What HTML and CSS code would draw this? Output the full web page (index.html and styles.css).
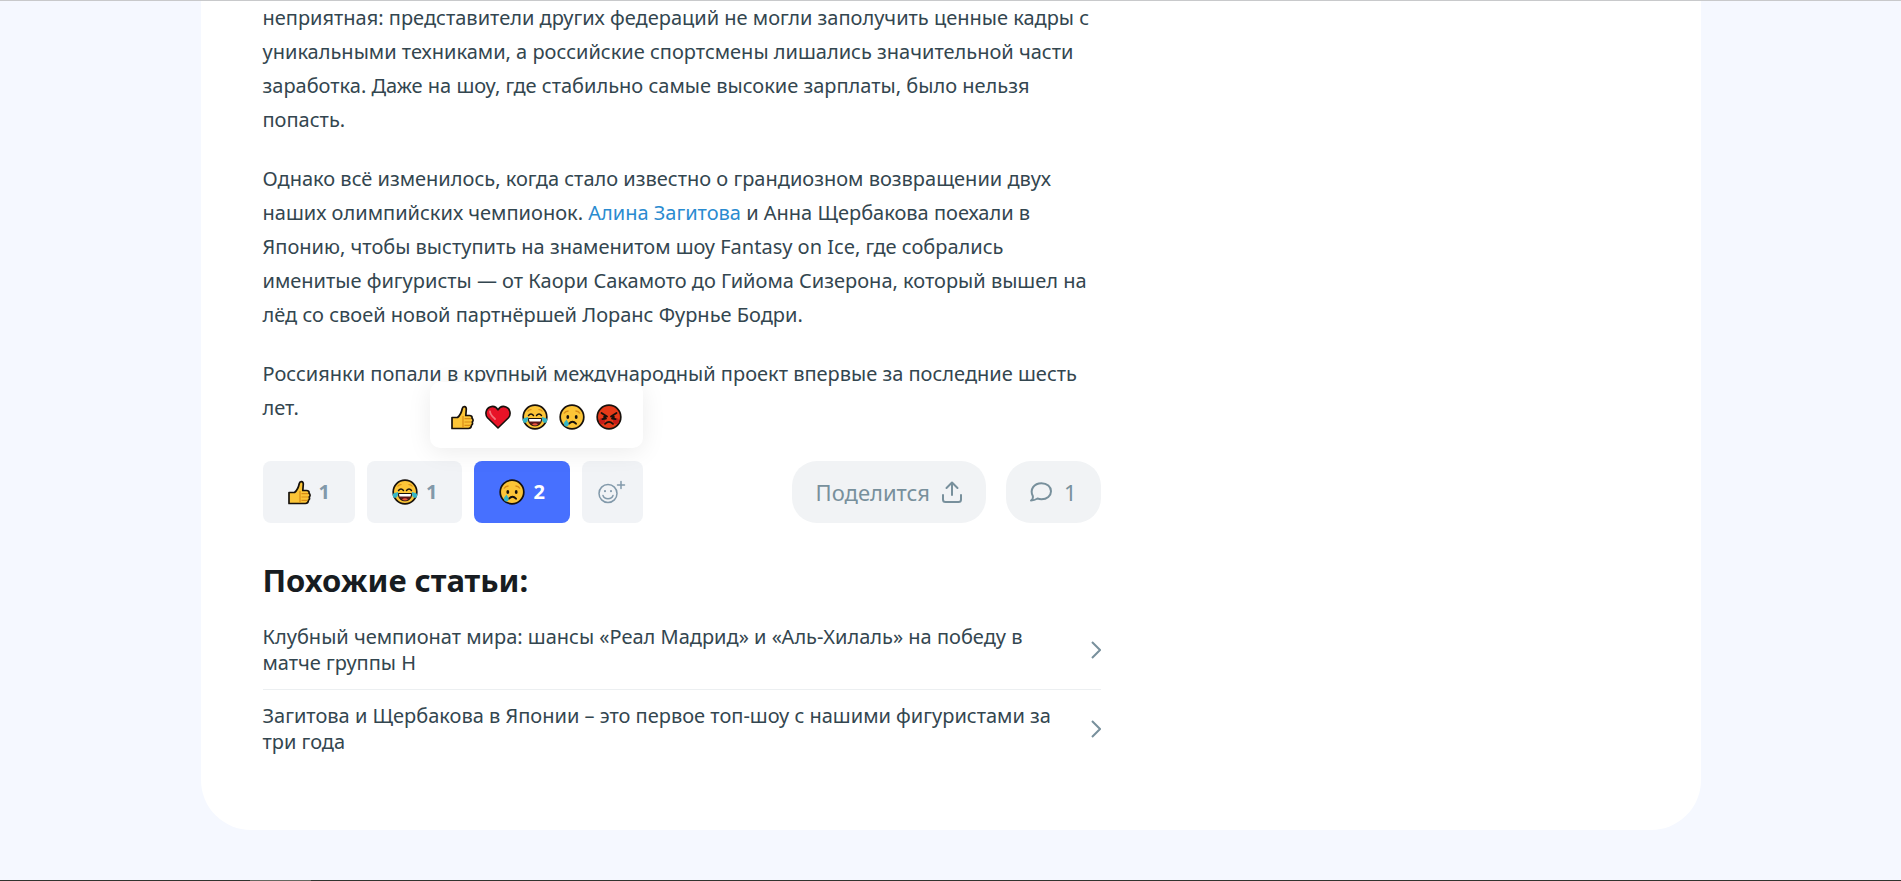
FILE: index.html
```html
<!DOCTYPE html>
<html lang="ru">

<head>
    <meta charset="UTF-8">
    <meta name="viewport" content="width=device-width, initial-scale=1.0">
    <title>Загитова и Щербакова в Японии</title>
    <link rel="stylesheet" href="styles.css">
</head>

<body>
    <!-- shared emoji -->
    <svg class="sprite" aria-hidden="true">
        <symbol id="thumb" viewBox="0 0 23 26">
            <path d="M1 13.500h5.500c2.500-2 4-5 4.800-9C11.800 1.800 15.300 2 15.300 5L14.800 11.500H18.500c2 0 3 1.300 2.500 2.800 1.500 1 1.300 2.800.2 3.700.8 1.300.2 2.800-.8 3.300 0 2-1 3.200-3 3.200H1z" fill="#fcc537" stroke="#17110c" stroke-width="1.700" stroke-linejoin="round" />
            <path d="M12 12v11.700M13.500 14.700h6.500M13.500 18h6.500M13.500 21.300h6" fill="none" stroke="#d98c16" stroke-width="1.200" />
        </symbol>
        <symbol id="heart" viewBox="0 0 26 26">
            <path d="M13 24L2.500 13.700C-.3 10.300.8 4.500 5 2.900c3-1.100 6.300 0 8 3 1.700-3 5-4.100 8-3 4.200 1.600 5.300 7.400 2.500 10.800z" fill="#e81327" stroke="#17110c" stroke-width="1.600" stroke-linejoin="round" />
            <path d="M5 7.500c.2 3.300 2.500 5 5 7.500" fill="none" stroke="#f4747b" stroke-width="1.800" stroke-linecap="round" />
        </symbol>
        <symbol id="joy" viewBox="0 0 26 26">
            <circle cx="13" cy="13" r="11.800" fill="#fcc537" stroke="#17110c" stroke-width="1.700" />
            <path d="M5.500 7.500q1.500-2 4-2M16.500 5.500q2.500 0 4 2" fill="none" stroke="#d98c16" stroke-width="1.200" />
            <path d="M6.500 11.500q2.500-3 5 0M14.500 11.500q2.500-3 5 0" fill="none" stroke="#17110c" stroke-width="1.500" stroke-linecap="round" />
            <path d="M6.300 14.500h13.400c0 4.500-2.500 7.300-6.700 7.300s-6.700-2.800-6.700-7.300z" fill="#5c1718" stroke="#17110c" stroke-width="1" />
            <path d="M7 15h12l-.5 2.500h-11z" fill="#fff" />
            <path d="M10 20.500q3-2.500 6 0-3 2-6 0z" fill="#ee5540" />
            <path d="M6 13c.5 3.500-.8 5.800-3.200 5.800S.3 15 1.800 14.200zM20 13c-.5 3.500.8 5.800 3.200 5.800s2.500-3.800 1-4.600z" fill="#35b5c4" />
        </symbol>
        <symbol id="sad" viewBox="0 0 26 26">
            <circle cx="13" cy="13" r="11.800" fill="#fcc537" stroke="#17110c" stroke-width="1.700" />
            <path d="M5 9.500q1.500-2.500 4.500-2.500M16.500 7q3 0 4.500 2.500" fill="none" stroke="#d98c16" stroke-width="1.400" />
            <ellipse cx="8.800" cy="13" rx="1.400" ry="2" fill="#17110c" />
            <ellipse cx="17.200" cy="13" rx="1.400" ry="2" fill="#17110c" />
            <path d="M10 19.700q3.500-3.800 7 0" fill="none" stroke="#17110c" stroke-width="1.900" stroke-linecap="round" />
            <path d="M7.500 15.500l1.800 3c1 2-.1 4-2 4s-3-2-2.100-4z" fill="#35b5c4" />
        </symbol>
        <symbol id="angry" viewBox="0 0 26 26">
            <circle cx="13" cy="13" r="11.800" fill="#e63a18" stroke="#17110c" stroke-width="1.700" />
            <circle cx="6" cy="17" r="3" fill="#c51b17" />
            <circle cx="20" cy="17" r="3" fill="#c51b17" />
            <path d="M5.500 9l5.500 3.500M20.500 9L15 12.500M6.500 15.200l3.500-.7M19.500 15.200l-3.500-.7M9 19.800q4-3.800 8 0" fill="none" stroke="#17110c" stroke-width="1.800" stroke-linecap="round" />
            <circle cx="8.700" cy="13" r="1.500" fill="#17110c" />
            <circle cx="17.300" cy="13" r="1.500" fill="#17110c" />
        </symbol>
        <symbol id="arrow" viewBox="0 0 10 18">
            <path d="M1 1l8 8-8 8" fill="none" stroke="currentColor" stroke-width="2" />
        </symbol>
    </svg>

    <main class="card">
        <article class="article">
            <p>неприятная: представители других федераций не могли заполучить ценные кадры с<br>
                уникальными техниками, а российские спортсмены лишались значительной части<br>
                заработка. Даже на шоу, где стабильно самые высокие зарплаты, было нельзя<br>
                попасть.</p>
            <p>Однако всё изменилось, когда стало известно о грандиозном возвращении двух<br>
                наших олимпийских чемпионок. <a href="#">Алина Загитова</a> и Анна Щербакова поехали в<br>
                Японию, чтобы выступить на знаменитом шоу Fantasy on Ice, где собрались<br>
                именитые фигуристы — от Каори Сакамото до Гийома Сизерона, который вышел на<br>
                лёд со своей новой партнёршей Лоранс Фурнье Бодри.</p>
            <p>Россиянки попали в крупный международный проект впервые за последние шесть<br>
                лет.</p>

            <div class="toolbar">
                <div class="reactions">
                    <button type="button" class="reaction"><svg class="emoji thumb"><use href="#thumb" /></svg>1</button>
                    <button type="button" class="reaction"><svg class="emoji"><use href="#joy" /></svg>1</button>
                    <button type="button" class="reaction active"><svg class="emoji"><use href="#sad" /></svg>2</button>
                    <div class="add">
                        <button type="button" class="reaction add-button" aria-label="Добавить реакцию">
                            <svg class="add-icon" viewBox="0 0 28 24" fill="none" stroke="currentColor" stroke-width="1.500" stroke-linecap="round">
                                <circle cx="10" cy="13.500" r="9" />
                                <path d="M5 15.500c1.500 4.300 8.500 4.300 10 0M23 1.500v7M19.500 5h7" />
                                <path d="M7 11v.2M13 11v.2" stroke-width="2" />
                            </svg>
                        </button>
                        <div class="picker">
                            <button type="button" aria-label="Нравится"><svg class="emoji thumb"><use href="#thumb" /></svg></button>
                            <button type="button" aria-label="Супер"><svg class="emoji"><use href="#heart" /></svg></button>
                            <button type="button" aria-label="Смешно"><svg class="emoji"><use href="#joy" /></svg></button>
                            <button type="button" aria-label="Грустно"><svg class="emoji"><use href="#sad" /></svg></button>
                            <button type="button" aria-label="Злюсь"><svg class="emoji"><use href="#angry" /></svg></button>
                        </div>
                    </div>
                </div>
                <div class="actions">
                    <button type="button" class="pill">Поделится
                        <svg class="share-icon" viewBox="0 0 20 22" fill="none" stroke="currentColor" stroke-width="2" stroke-linecap="round" stroke-linejoin="round">
                            <path d="M10 14V1.500M4.500 7L10 1.500 15.500 7M1 14v4.500Q1 21 3.500 21h13q2.500 0 2.500-2.500V14" />
                        </svg>
                    </button>
                    <a href="#" class="pill" aria-label="Комментарии: 1">
                        <svg class="comment-icon" viewBox="0 0 22 20" fill="none" stroke="currentColor" stroke-width="2" stroke-linejoin="round">
                            <path d="M1 18.500c1.700-1 2.200-2.500 1.800-4.500C-.5 7.500 4 1.200 11.500 1.200c5.500 0 9.500 3.500 9.500 8s-4 8-9.500 8c-1.500 0-2.700-.2-4-.7-2 1.300-4 2-6.500 2z" />
                        </svg>
                        1
                    </a>
                </div>
            </div>

            <section class="related">
                <h2>Похожие статьи:</h2>
                <ul>
                    <li>
                        <a href="#"><span>Клубный чемпионат мира: шансы «Реал Мадрид» и «Аль-Хилаль» на победу в<br>матче группы H</span>
                            <svg class="arrow"><use href="#arrow" /></svg></a>
                    </li>
                    <li>
                        <a href="#"><span>Загитова и Щербакова в Японии – это первое топ-шоу с нашими фигуристами за<br>три года</span>
                            <svg class="arrow"><use href="#arrow" /></svg></a>
                    </li>
                </ul>
            </section>
        </article>
    </main>
    <footer class="footer">
        <div class="footer-mark"></div>
    </footer>
</body>

</html>
```
FILE: styles.css
```css
* {
    box-sizing: border-box;
}

body {
    display: flex;
    flex-direction: column;
    min-height: 100vh;
    margin: 0;
    border-top: 1px solid #c8c9cb;
    background-color: #f5f8ff;
    color: #33464f;
    font-family: 'Noto Sans', 'Open Sans', sans-serif;
    font-size: 20px;
    line-height: 34px;
}

a {
    color: #2a8bd0;
    text-decoration: none;
}

button {
    padding: 0;
    border: 0;
    background: none;
    color: inherit;
    font: inherit;
    cursor: pointer;
}

svg {
    display: block;
    flex-shrink: 0;
}

.sprite {
    position: absolute;
    width: 0;
    height: 0;
}

.card {
    width: 100%;
    max-width: 1500px;
    margin: 0 auto;
    padding: 0 62px 62px;
    border-radius: 0 0 50px 50px;
    background-color: #fff;
}

.article {
    max-width: 838px;
}

.article p {
    margin: 0 0 25px;
    white-space: nowrap;
}

.toolbar {
    display: flex;
    justify-content: space-between;
    margin-top: 36px;
}

.reactions {
    display: flex;
    gap: 12px;
}

.reaction {
    display: flex;
    align-items: center;
    justify-content: center;
    gap: 8px;
    height: 62px;
    padding: 0 25px;
    border-radius: 8px;
    background-color: #f1f3f6;
    color: #8299aa;
    font-weight: 700;
}

.reaction.active {
    background-color: #4770ff;
    color: #fff;
}

.emoji {
    width: 26px;
    height: 26px;
}

.emoji.thumb {
    width: 23px;
}

.add {
    position: relative;
}

.add-button {
    width: 61px;
    padding: 0;
}

.add-icon {
    width: 28px;
    height: 24px;
}

.picker {
    position: absolute;
    right: 0;
    bottom: calc(100% + 13px);
    display: flex;
    align-items: center;
    gap: 11px;
    height: 66px;
    padding: 4px 21px 0;
    border-radius: 10px;
    background-color: #fff;
    box-shadow: 0 4px 24px rgba(0, 0, 0, 0.08);
}

.actions {
    display: flex;
    gap: 20px;
}

.pill {
    display: flex;
    align-items: center;
    gap: 12px;
    height: 62px;
    padding: 0 24px;
    border-radius: 25px;
    background-color: #f1f3f5;
    color: #78909c;
    font-size: 22px;
}

.share-icon {
    width: 20px;
    height: 22px;
}

.comment-icon {
    width: 22px;
    height: 20px;
}

.related {
    margin-top: 37px;
}

.related h2 {
    margin: 0 0 11px;
    color: #171c21;
    font-size: 31px;
    font-weight: 700;
    line-height: 40px;
}

.related ul {
    margin: 0;
    padding: 0;
    list-style: none;
}

.related li + li {
    border-top: 1px solid #eceff1;
}

.related li a {
    display: flex;
    align-items: center;
    justify-content: space-between;
    padding: 13px 0;
    color: inherit;
    line-height: 26px;
    white-space: nowrap;
}

.arrow {
    width: 10px;
    height: 18px;
    color: #78909c;
}

.footer {
    height: 1px;
    margin-top: auto;
    background-color: #30342f;
}

.footer-mark {
    width: 61px;
    height: 1px;
    margin-left: 250px;
    background-color: #64675f;
}
```
